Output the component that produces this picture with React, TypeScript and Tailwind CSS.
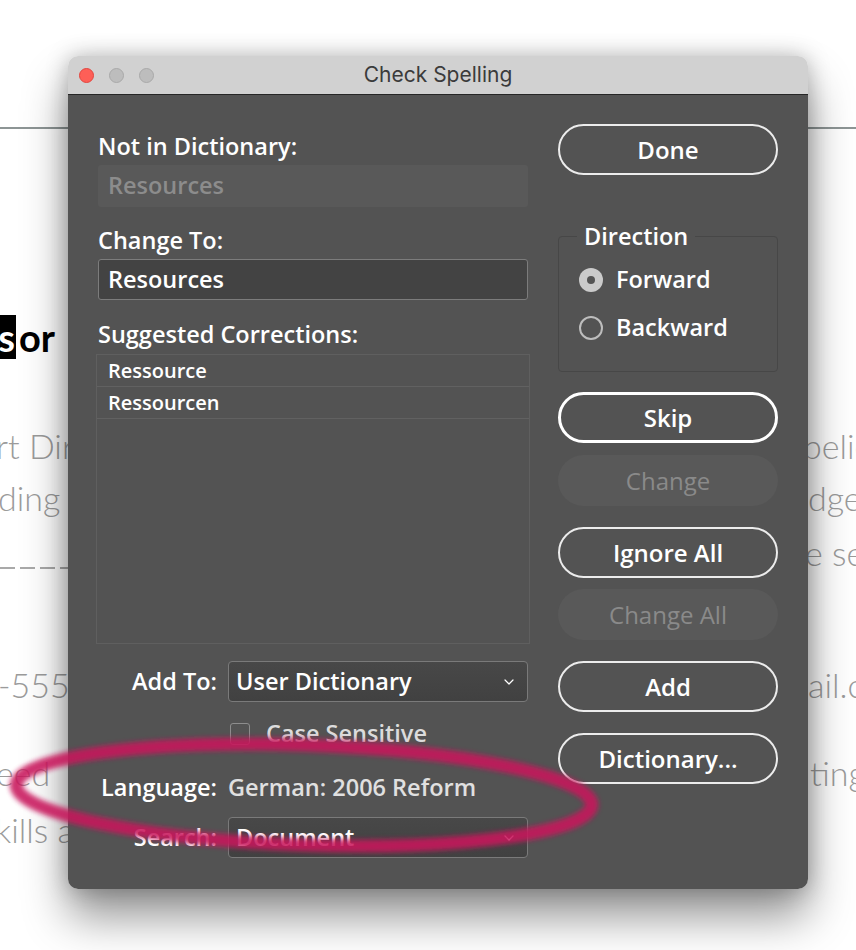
import React from 'react';
import { ChevronDown } from 'lucide-react';

const dialogFont = { fontFamily: '"Open Sans", "Noto Sans", sans-serif' };

const PillButton: React.FC<{ label: string; mt: string; primary?: boolean; disabled?: boolean }> = ({
  label,
  mt,
  primary,
  disabled,
}) => {
  if (disabled) {
    return (
      <div className={`${mt} h-[51px] rounded-full bg-[#595959] flex items-center justify-center text-[24px] font-medium text-[#8a8a8a]`}>
        {label}
      </div>
    );
  }
  return (
    <div
      className={`${mt} h-[51px] rounded-full flex items-center justify-center text-[24px] text-white font-[550] ${
        primary ? 'border-[3px] border-white' : 'border-2 border-[#ececec]'
      }`}
    >
      {label}
    </div>
  );
};

const Select: React.FC<{ value: string; valueClass?: string }> = ({ value, valueClass }) => (
  <div className="flex-1 h-[41px] rounded-[4px] border border-[#7a7a7a] bg-gradient-to-b from-[#484848] to-[#414141] flex items-center pl-[7px] pr-[10px]">
    <span className={`flex-1 ${valueClass ?? 'text-white'}`}>{value}</span>
    <ChevronDown className="w-[16px] h-[16px] text-white" strokeWidth={1.8} />
  </div>
);

export default function App() {
  return (
    <div className="relative w-[856px] h-[950px] bg-white overflow-hidden">
      {/* document behind the dialog */}
      <div
        className="absolute inset-0 text-[34px] text-[#9b9b9b] font-light whitespace-nowrap"
        style={{ fontFamily: 'Lato, "Noto Sans", sans-serif' }}
      >
        <div className="h-[127px]" />
        <div className="h-[2px] bg-[#8d9595]" />
        <div className="h-[186px]" />
        <div className="flex items-center h-[44px] text-[38px] font-bold">
          <span className="bg-black text-white pl-[2px] pr-[1px] leading-[44px] -ml-[24px]">es</span>
          <span className="ml-[3px] text-black">or</span>
        </div>
        <div className="h-[60px]" />
        <div className="flex h-[52px] items-center">
          <span className="w-[803px] shrink-0 -ml-[4px]">rt Dir</span>
          <span className="ml-[4px]">belie</span>
        </div>
        <div className="flex h-[52px] items-center">
          <span className="w-[808px] shrink-0 -ml-[2px]">ding</span>
          <span className="ml-[2px]">dge</span>
        </div>
        <div className="h-[4px]" />
        <div className="flex h-[52px] items-start">
          <div className="w-[805px] shrink-0 mt-[40px] h-[2px] bg-[repeating-linear-gradient(90deg,#a9a9a9_0_15px,transparent_15px_20px)]" />
          <span className="leading-[52px]">e se</span>
        </div>
        <div className="h-[79px]" />
        <div className="flex h-[52px] items-center">
          <span className="w-[808px] shrink-0 -ml-[2px]">-555-</span>
          <span className="ml-[2px]">ail.c</span>
        </div>
        <div className="h-[36px]" />
        <div className="flex h-[52px] items-center">
          <span className="w-[810px] shrink-0 -ml-[4px]">eed</span>
          <span className="ml-[4px]">ting</span>
        </div>
        <div className="h-[5px]" />
        <div className="flex h-[52px] items-center">
          <span className="-ml-[5px]">kills a</span>
        </div>
      </div>

      {/* Check Spelling dialog */}
      <div
        className="relative ml-[68px] mt-[56px] w-[740px] rounded-[10px] overflow-hidden shadow-[0_28px_45px_rgba(0,0,0,0.42),0_0_22px_rgba(0,0,0,0.25)]"
        style={dialogFont}
      >
        <div className="h-[39px] bg-[#d1d1d1] border-b border-[#262626] flex items-center px-[11px] relative">
          <div className="flex gap-[15px]">
            <span className="w-[15px] h-[15px] rounded-full bg-[#fe5f57] border border-[#e2463f]" />
            <span className="w-[15px] h-[15px] rounded-full bg-[#bdbdbd] border border-[#a9a9a9]" />
            <span className="w-[15px] h-[15px] rounded-full bg-[#bdbdbd] border border-[#a9a9a9]" />
          </div>
          <div
            className="absolute inset-0 flex items-center justify-center text-[21px] text-[#3b3b3b]"
            style={{ fontFamily: 'Inter, "Open Sans", sans-serif' }}
          >
            Check Spelling
          </div>
        </div>

        <div className="bg-[#535353] flex gap-[30px] px-[30px] pb-[31px]">
          {/* left column */}
          <div className="w-[430px] flex flex-col pt-[37px] text-[23.5px] font-[550] text-white">
            <div className="leading-[28px]">Not in Dictionary:</div>
            <div className="mt-[5px] h-[42px] rounded-[3px] bg-[#595959] flex items-center pl-[10px] text-[#8c8c8c]">
              Resources
            </div>
            <div className="mt-[19px] leading-[28px]">Change To:</div>
            <div className="mt-[5px] h-[41px] rounded-[3px] border border-[#7c7c7c] bg-[#434343] flex items-center pl-[9px]">
              Resources
            </div>
            <div className="mt-[20px] leading-[28px]">Suggested Corrections:</div>
            <div className="mt-[6px] -mx-[2px] h-[290px] border border-[#5f5f5f] text-[20px]">
              <div className="h-[32px] border-b border-[#616161] flex items-center pl-[11px]">Ressource</div>
              <div className="h-[32px] border-b border-[#616161] flex items-center pl-[11px]">Ressourcen</div>
            </div>
            <div className="mt-[17px] flex items-center gap-[11px]">
              <span className="w-[119px] text-right">Add To:</span>
              <Select value="User Dictionary" />
            </div>
            <div className="mt-[20px] flex items-center pl-[132px] h-[24px]">
              <span className="w-[20px] h-[22px] rounded-[3px] border-[1.5px] border-[#8d8d8d]" />
              <span className="ml-[16px] text-[#dcdcdc]">Case Sensitive</span>
            </div>
            <div className="mt-[27px] flex items-center gap-[11px] leading-[28px]">
              <span className="w-[119px] text-right">Language:</span>
              <span className="text-[#e0e0e0]">German: 2006 Reform</span>
            </div>
            <div className="mt-[16px] flex items-center gap-[11px]">
              <span className="w-[119px] text-right">Search:</span>
              <Select value="Document" />
            </div>
          </div>

          {/* right column */}
          <div className="w-[220px] flex flex-col pt-[29px]">
            <PillButton label="Done" mt="mt-0" />
            <fieldset className="mt-[47px] h-[150px] border border-[#474747] rounded-[4px] pl-[20px] pr-[10px] text-[23.5px] font-[550] text-white">
              <legend className="px-[7px] -ml-[2px] leading-[28px]">Direction</legend>
              <div className="mt-[10px] flex items-center h-[40px]">
                <span className="w-[24px] h-[24px] rounded-full bg-[#cbcbcb] flex items-center justify-center">
                  <span className="w-[8px] h-[8px] rounded-full bg-[#555555]" />
                </span>
                <span className="ml-[13px]">Forward</span>
              </div>
              <div className="mt-[8px] flex items-center h-[40px]">
                <span className="w-[24px] h-[24px] rounded-full border-2 border-[#bdbdbd]" />
                <span className="ml-[13px]">Backward</span>
              </div>
            </fieldset>
            <PillButton label="Skip" mt="mt-[20px]" primary />
            <PillButton label="Change" mt="mt-[12px]" disabled />
            <PillButton label="Ignore All" mt="mt-[21px]" />
            <PillButton label="Change All" mt="mt-[11px]" disabled />
            <PillButton label="Add" mt="mt-[21px]" />
            <PillButton label="Dictionary..." mt="mt-[21px]" />
          </div>
        </div>
      </div>

      {/* hand-drawn highlight */}
      <svg className="absolute inset-0 pointer-events-none" width="856" height="950" viewBox="0 0 856 950">
        <defs>
          <filter id="soft" x="-10%" y="-30%" width="120%" height="160%">
            <feGaussianBlur stdDeviation="2.6" />
          </filter>
        </defs>
        <ellipse
          cx="304"
          cy="795"
          rx="288"
          ry="50"
          transform="rotate(2 304 795)"
          fill="none"
          stroke="#c8175c"
          strokeWidth="13"
          opacity="0.88"
          filter="url(#soft)"
        />
      </svg>
    </div>
  );
}
